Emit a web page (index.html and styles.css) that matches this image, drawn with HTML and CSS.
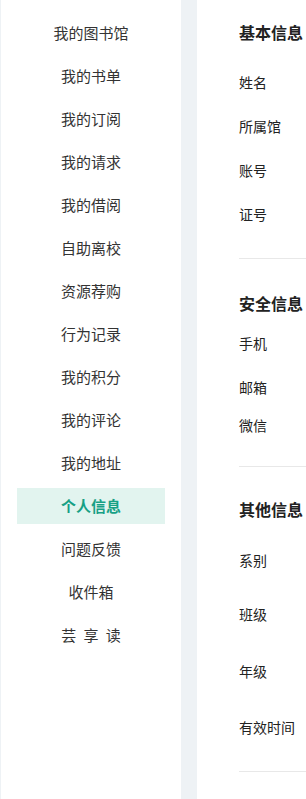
FILE: index.html
```html
<!DOCTYPE html>
<html lang="zh-CN">
<head>
<meta charset="utf-8">
<link rel="stylesheet" href="styles.css">
</head>
<body>
<div class="page">
  <nav class="sidebar">
    <div class="nav-item">我的图书馆</div>
    <div class="nav-item">我的书单</div>
    <div class="nav-item">我的订阅</div>
    <div class="nav-item">我的请求</div>
    <div class="nav-item">我的借阅</div>
    <div class="nav-item">自助离校</div>
    <div class="nav-item">资源荐购</div>
    <div class="nav-item">行为记录</div>
    <div class="nav-item">我的积分</div>
    <div class="nav-item">我的评论</div>
    <div class="nav-item">我的地址</div>
    <div class="nav-item active">个人信息</div>
    <div class="nav-item">问题反馈</div>
    <div class="nav-item">收件箱</div>
    <div class="nav-item spaced">芸 享 读</div>
  </nav>
  <main class="content">
    <section class="section s1">
      <h2 class="title">基本信息</h2>
      <div class="row">姓名</div>
      <div class="row">所属馆</div>
      <div class="row">账号</div>
      <div class="row">证号</div>
    </section>
    <section class="section s2">
      <h2 class="title">安全信息</h2>
      <div class="row">手机</div>
      <div class="row">邮箱</div>
      <div class="row short">微信</div>
    </section>
    <section class="section s3">
      <h2 class="title">其他信息</h2>
      <div class="row r48">系别</div>
      <div class="row r60">班级</div>
      <div class="row r54">年级</div>
      <div class="row r58">有效时间</div>
    </section>
  </main>
</div>
</body>
</html>
```

FILE: styles.css
```css
html, body {
  margin: 0;
  padding: 0;
  background: #eef2f5;
  font-family: "Noto Sans CJK SC", "Noto Sans", sans-serif;
  color: #333;
}
.page {
  display: flex;
  min-height: 799px;
  padding-left: 1px;
  gap: 16px;
}
.sidebar {
  width: 180px;
  flex: none;
  background: #fff;
  padding-top: 15px;
  box-sizing: border-box;
  min-height: 799px;
}
.nav-item {
  height: 36px;
  line-height: 35px;
  padding-bottom: 1px;
  box-sizing: border-box;
  margin: 0 16px 7px;
  text-align: center;
  font-size: 15px;
  color: #333;
}
.nav-item.active {
  background: #e2f4ef;
  color: #17a085;
  font-weight: bold;
}
.nav-item.spaced {
  word-spacing: 4px;
}
.content {
  flex: 1;
  background: #fff;
  padding-left: 42px;
  min-height: 799px;
}
.section {
  border-bottom: 1px solid #e8e8e8;
}
.s1 { padding-top: 20px; padding-bottom: 22px; }
.s2 { padding-top: 32px; padding-bottom: 25px; }
.s3 { padding-top: 30px; padding-bottom: 15px; }
.title {
  margin: 0;
  font-size: 16px;
  line-height: 24px;
  height: 24px;
  font-weight: bold;
  color: #222;
}
.s1 .title { margin-bottom: 16px; }
.s2 .title { margin-bottom: 6px; }
.s3 .title { margin-bottom: 15px; }
.row {
  height: 44px;
  display: flex;
  align-items: center;
  padding-bottom: 1px;
  box-sizing: border-box;
  font-size: 14px;
  color: #222;
  white-space: nowrap;
}
.row.short { height: 32px; }
.row.r48 { height: 48px; }
.row.r60 { height: 60px; }
.row.r54 { height: 54px; }
.row.r58 { height: 58px; }
```
